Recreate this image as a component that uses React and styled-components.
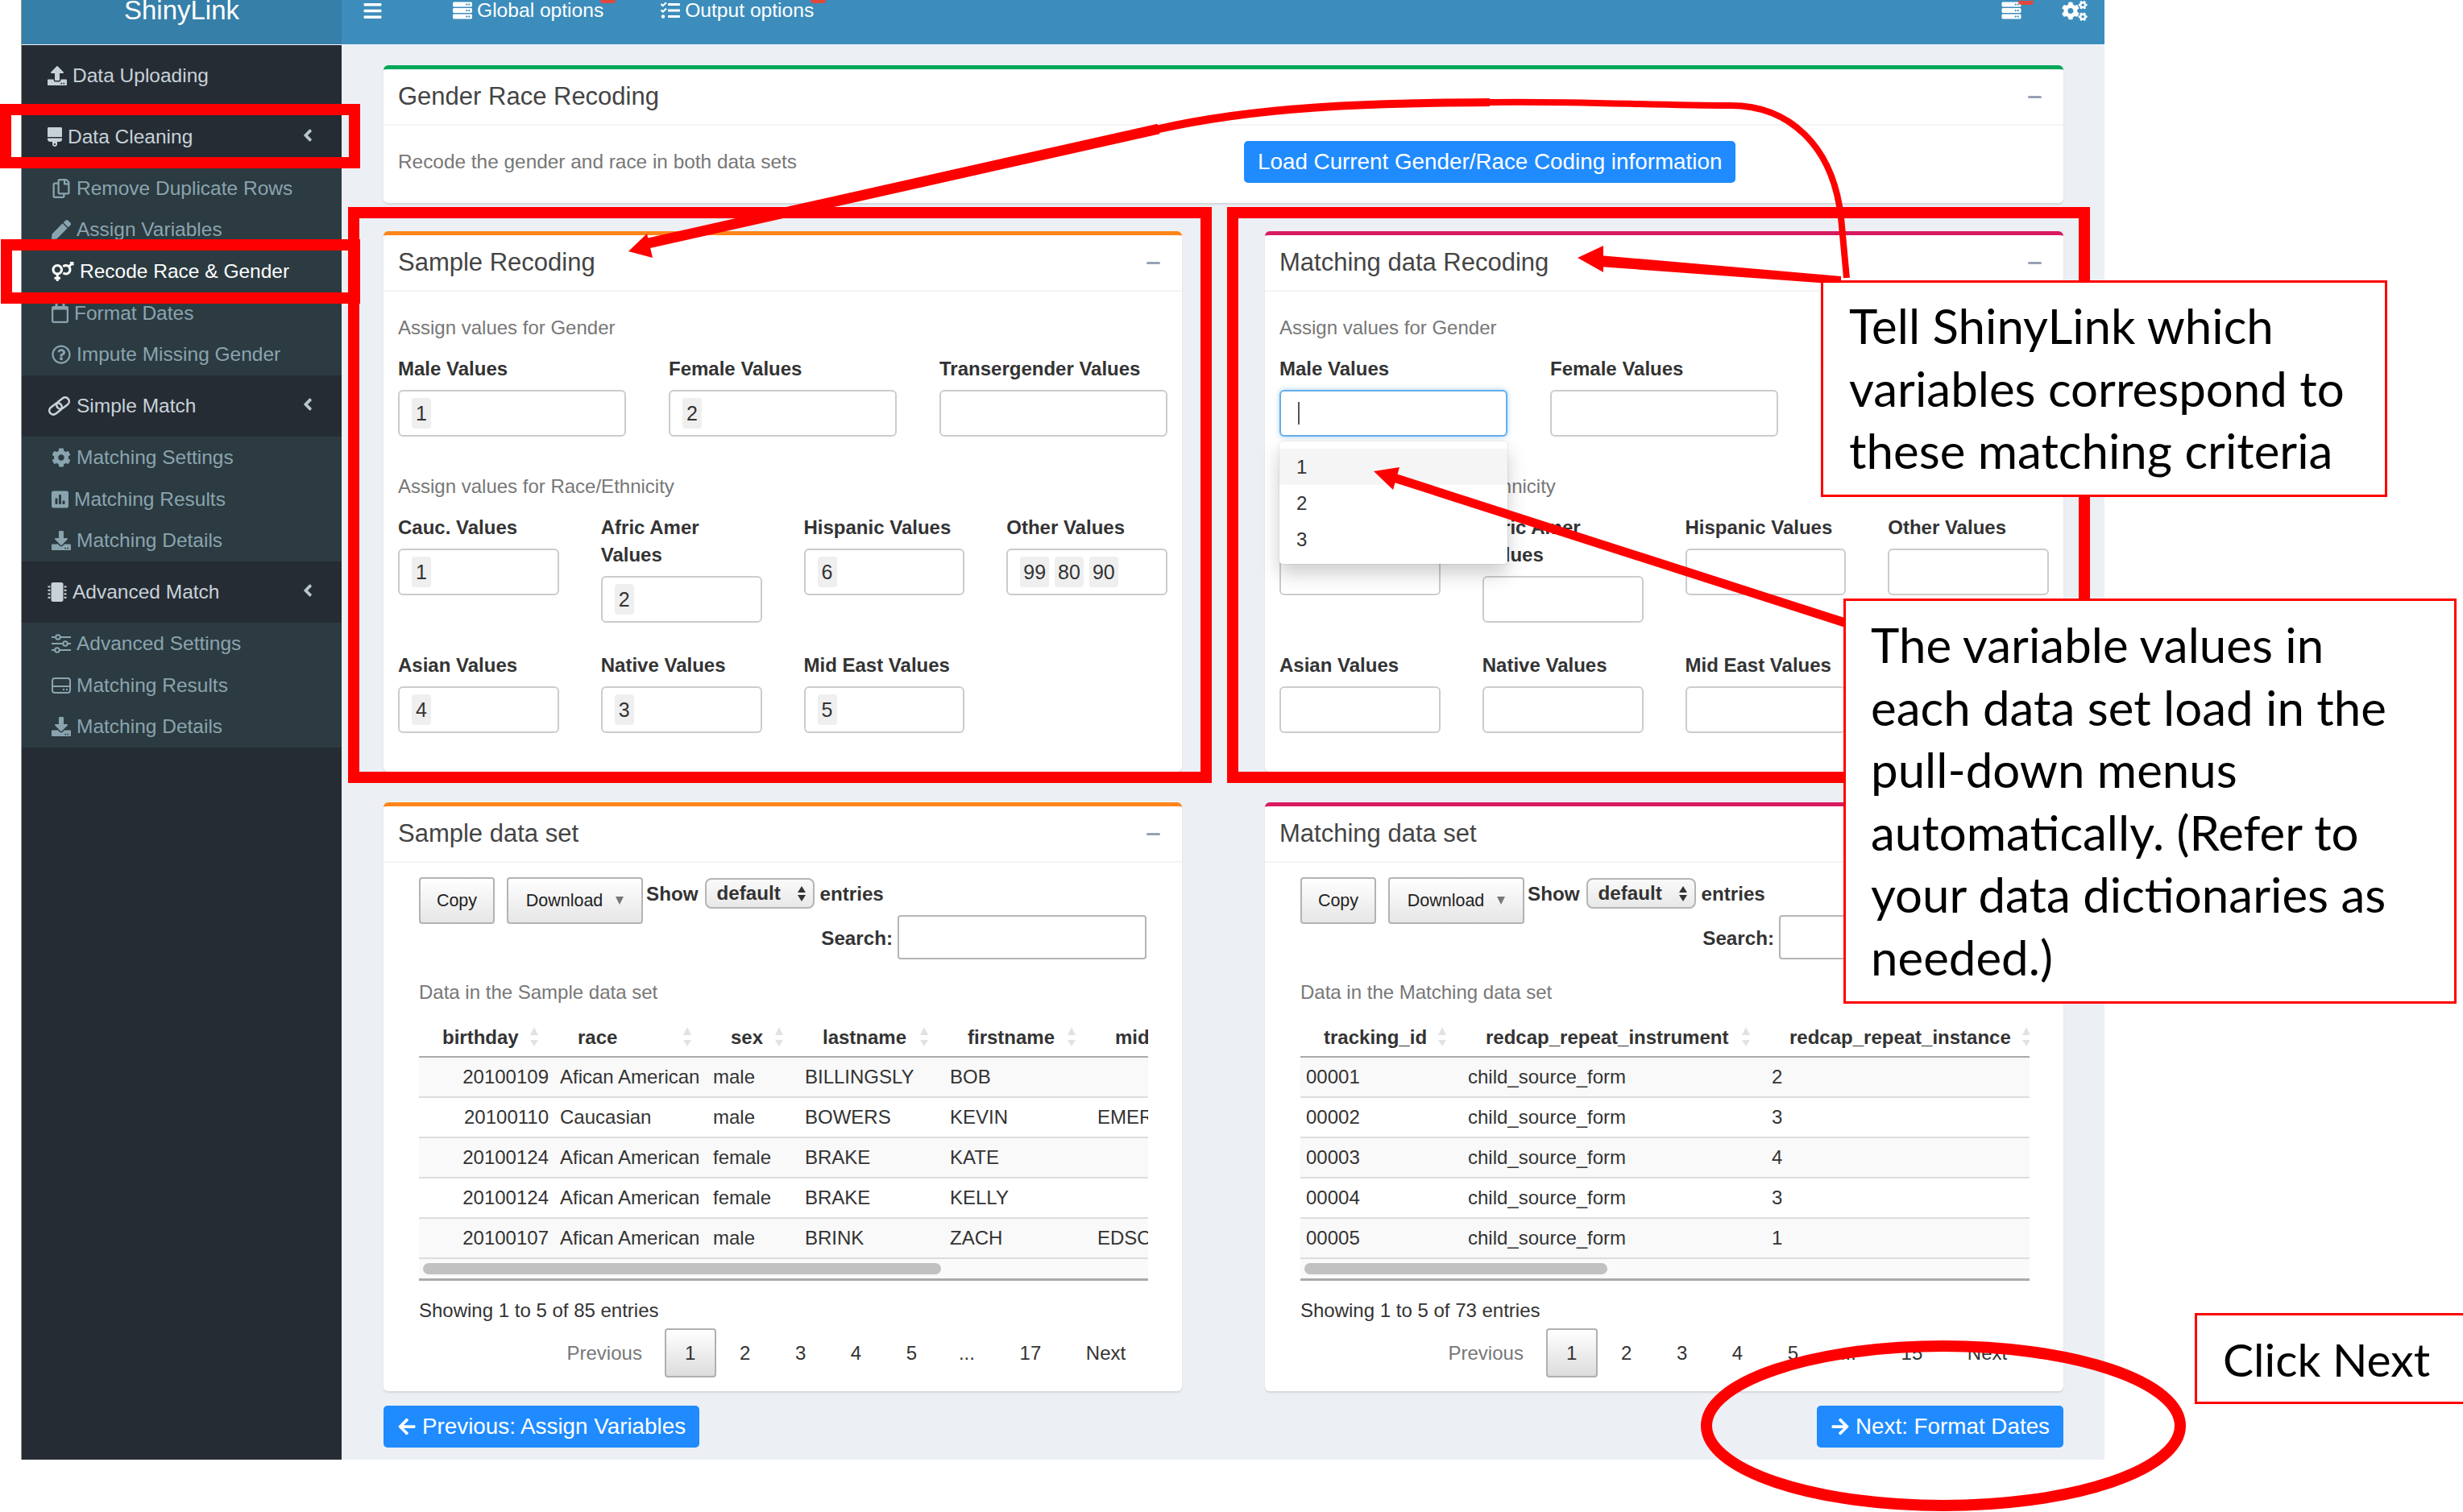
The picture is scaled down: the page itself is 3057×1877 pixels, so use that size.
import React from 'react';
import styled, { createGlobalStyle } from 'styled-components';
import {
  FaAngleLeft, FaArrowLeft, FaArrowRight, FaBars, FaBrush, FaCog, FaCogs, FaDownload,
  FaMicrochip, FaPen, FaPoll, FaRegCalendar, FaRegCopy, FaRegQuestionCircle,
  FaServer, FaTasks, FaUpload, FaVenusMars,
} from 'react-icons/fa';

const GlobalStyle = createGlobalStyle`
  html, body { margin: 0; background: #fff; }
  * { box-sizing: border-box; }
  body { font-family: "Liberation Sans", Arial, sans-serif; color: #333; }
`;

const Page = styled.div`
  position: relative;
  width: 3057px;
  height: 1877px;
  overflow: hidden;
`;

const Frame = styled.div`
  margin-left: 27px;
  width: 2585px;
  height: 1812px;
  display: flex;
  flex-direction: column;
  box-shadow: -1px 0 0 #999;
`;

const Header = styled.header`
  display: flex;
  height: 56px;
  flex: none;
  background: #3c8dbc;
  border-bottom: 1px solid #f4f6f9;
  color: #fff;
`;

const Logo = styled.div`
  width: 397px;
  height: 55px;
  background: #367fa9;
  font-size: 33px;
  line-height: 26px;
  text-align: center;
`;

const HeaderBar = styled.div`
  flex: 1;
  display: flex;
  height: 26px;
  align-items: center;
  padding: 0 21px 0 26px;
  font-size: 24.6px;
`;

const Burger = styled.span`
  display: flex;
  font-size: 25px;
  margin-right: 87px;
`;

const HeaderLink = styled.span`
  position: relative;
  display: flex;
  align-items: center;
  gap: 6px;
  margin-right: 71px;
  svg { font-size: 24px; }
`;

const Badge = styled.i`
  position: absolute;
  right: -15px;
  top: 0;
  width: 19px;
  height: 5px;
  background: #e0483c;
  border-radius: 0 0 4px 4px;
`;

const Spacer = styled.span`
  flex: 1;
`;

const HeaderIcon = styled.span`
  position: relative;
  display: flex;
  flex: none;
  width: ${(p) => p.$w}px;
  height: ${(p) => p.$h}px;
  margin-left: ${(p) => p.$gap || 0}px;
  svg { width: 100%; height: 100%; }
`;

const Body = styled.div`
  flex: 1;
  display: flex;
  min-height: 0;
`;

const Sidebar = styled.nav`
  width: 397px;
  flex: none;
  background: #262c34;
`;

const IconSlot = styled.span`
  display: flex;
  flex: none;
  width: ${(p) => p.$w}px;
  height: 24px;
  svg { width: 100%; height: 100%; }
`;

const NavItem = styled.div`
  display: flex;
  align-items: center;
  height: 76px;
  padding: 0 30px 0 32px;
  gap: 7px;
  font-size: 24.5px;
  color: #c6d2d8;
`;

const Chevron = styled(FaAngleLeft)`
  margin-left: auto;
  margin-bottom: 4px;
  font-size: 24px;
  color: #b8c7ce;
`;

const SubMenu = styled.div`
  background: #2c3b41;
`;

const SubItem = styled.div`
  display: flex;
  align-items: center;
  height: 51.67px;
  padding-left: 37px;
  gap: 7px;
  font-size: 24.5px;
  color: ${(p) => (p.$active ? '#fff' : '#8aa4af')};
`;

const Main = styled.main`
  flex: 1;
  background: #ecf0f5;
  padding: 25px 51px 0 52px;
`;

const Card = styled.section`
  background: #fff;
  border-top: 5px solid ${(p) => p.$accent};
  border-radius: 6px;
  box-shadow: 0 2px 2px rgba(0, 0, 0, 0.1);
  height: ${(p) => p.$height}px;
`;

const CardHeader = styled.div`
  display: flex;
  align-items: center;
  justify-content: space-between;
  height: 70px;
  padding: 0 27px 0 18px;
  border-bottom: 2px solid #f4f4f4;
`;

const CardTitle = styled.h3`
  margin: 0;
  font-size: 31px;
  font-weight: 400;
  color: #444;
`;

const Collapse = styled.span`
  width: 17px;
  height: 3px;
  background: #97a0b3;
  border-radius: 2px;
`;

const IntroRow = styled.div`
  display: flex;
  align-items: center;
  padding: 19px 18px;
`;

const IntroText = styled.div`
  width: 1050px;
  font-size: 24.4px;
  color: #777;
`;

const PrimaryButton = styled.button`
  display: inline-flex;
  align-items: center;
  gap: 7px;
  height: 52px;
  padding: 0 17px;
  border: 0;
  border-radius: 5px;
  background: #1f8bff;
  color: #fff;
  font: 27.8px "Liberation Sans", Arial, sans-serif;
  white-space: nowrap;
  svg { font-size: 24px; }
`;

const TwoColumns = styled.div`
  display: grid;
  grid-template-columns: 991px 991px;
  gap: 103px;
  margin-top: ${(p) => p.$top}px;
`;

const FormBody = styled.div`
  padding: 30px 18px 0;
`;

const Hint = styled.div`
  height: 30px;
  line-height: 30px;
  font-size: 24px;
  color: #777;
  margin-top: ${(p) => p.$top || 0}px;
`;

const FieldGrid = styled.div`
  display: grid;
  grid-template-columns: repeat(${(p) => p.$cols}, 1fr);
  column-gap: ${(p) => p.$gap}px;
  row-gap: 36px;
  align-items: start;
  margin-top: 19px;
`;

const Field = styled.div`
  position: relative;
`;

const FieldLabel = styled.div`
  font-size: 24px;
  line-height: 34px;
  font-weight: 700;
  color: #333;
  margin-bottom: 9px;
`;

const TagInput = styled.div`
  display: flex;
  align-items: center;
  gap: 7px;
  height: 58px;
  padding-left: ${(p) => (p.$focused ? 21 : 15)}px;
  background: #fff;
  border: 2px solid ${(p) => (p.$focused ? '#66afe9' : '#ccc')};
  border-radius: 6px;
  box-shadow: ${(p) => (p.$focused ? '0 0 6px rgba(102, 175, 233, 0.6)' : 'none')};
`;

const Tag = styled.span`
  display: flex;
  align-items: center;
  justify-content: center;
  min-width: 24px;
  height: 38px;
  padding: 0 4px;
  border-radius: 4px;
  background: #efefef;
  font-size: 25px;
  color: #333;
`;

const Caret = styled.i`
  width: 2px;
  height: 28px;
  background: #555;
`;

const Dropdown = styled.div`
  position: absolute;
  z-index: 2;
  top: 107px;
  left: 0;
  right: 0;
  height: 152px;
  padding-top: 9px;
  background: #fff;
  border-radius: 4px;
  box-shadow: 0 12px 24px rgba(0, 0, 0, 0.2), 0 0 2px rgba(0, 0, 0, 0.2);
`;

const Option = styled.div`
  height: 45px;
  line-height: 45px;
  padding-left: 21px;
  font-size: 24px;
  color: #333;
  background: ${(p) => (p.$active ? '#f5f5f5' : '#fff')};
`;

const TableBody = styled.div`
  padding: 18px 42px 0 44px;
`;

const Toolbar = styled.div`
  display: flex;
  align-items: flex-start;
  height: 47px;
`;

const DtButton = styled.button`
  display: flex;
  align-items: center;
  justify-content: center;
  flex: none;
  gap: 16px;
  width: ${(p) => p.$width}px;
  height: 58px;
  margin-right: ${(p) => p.$gap}px;
  padding: 0;
  background: linear-gradient(#fff, #e6e6e6);
  border: 2px solid #b3b3b3;
  border-radius: 4px;
  font: 21.5px "Liberation Sans", Arial, sans-serif;
  color: #222;
`;

const DownCaret = styled.i`
  width: 0;
  height: 0;
  border: 5px solid transparent;
  border-top: 10px solid #777;
  border-bottom: 0;
`;

const ToolText = styled.span`
  padding-top: 2px;
  font-size: 24.2px;
  font-weight: 700;
  line-height: 38px;
  color: #333;
`;

const SelectBox = styled.div`
  display: flex;
  align-items: center;
  justify-content: space-between;
  width: 136px;
  height: 38px;
  margin: 1px 7px 0 8px;
  padding: 0 9px 0 13px;
  background: linear-gradient(#fafafa, #e8e8e8);
  border: 2px solid #b5b5b5;
  border-radius: 8px;
  font-size: 24.2px;
  font-weight: 700;
  color: #333;
`;

const SelectArrows = styled.span`
  display: flex;
  flex-direction: column;
  gap: 3px;
  &::before, &::after {
    content: '';
    border: 5px solid transparent;
  }
  &::before { border-bottom: 8px solid #333; border-top: 0; }
  &::after { border-top: 8px solid #333; border-bottom: 0; }
`;

const SearchRow = styled.div`
  display: flex;
  align-items: center;
  justify-content: flex-end;
  gap: 6px;
  padding-right: 2px;
`;

const SearchBox = styled.div`
  width: 309px;
  height: 55px;
  background: #fff;
  border: 2px solid #b5b5b5;
  border-radius: 4px;
`;

const Caption = styled.div`
  height: 30px;
  line-height: 30px;
  margin: 26px 0 17px;
  font-size: 24px;
  color: #777;
`;

const TableWrap = styled.div`
  width: 905px;
  overflow: hidden;
`;

const Table = styled.table`
  table-layout: fixed;
  border-collapse: separate;
  border-spacing: 0;
  font-size: 24px;
  white-space: nowrap;
`;

const Th = styled.th`
  position: relative;
  height: 49px;
  padding: 0 0 0 29px;
  border-bottom: 2px solid #aaa;
  text-align: left;
  font-weight: 700;
  color: #333;
`;

const SortArrows = styled.span`
  position: absolute;
  right: 20px;
  top: 11px;
  display: flex;
  flex-direction: column;
  gap: 6px;
  &::before, &::after {
    content: '';
    border: 5px solid transparent;
  }
  &::before { border-bottom: 10px solid #e2e2e2; border-top: 0; }
  &::after { border-top: 8px solid #e2e2e2; border-bottom: 0; }
`;

const Td = styled.td`
  height: 50px;
  padding: 0 7px;
  border-bottom: 2px solid #ddd;
  text-align: ${(p) => p.$align || 'left'};
  overflow: hidden;
  color: #333;
  background: ${(p) => (p.$odd ? '#f9f9f9' : '#fff')};
`;

const ScrollTrack = styled.div`
  height: 27px;
  padding: 5px 0 0 ${(p) => p.$left}px;
  background: #fafafa;
  border-bottom: 3px solid #aaa;
`;

const ScrollThumb = styled.div`
  width: ${(p) => p.$width}px;
  height: 14px;
  background: #c1c1c1;
  border-radius: 7px;
`;

const Info = styled.div`
  height: 30px;
  line-height: 30px;
  margin-top: 22px;
  font-size: 24px;
  color: #333;
`;

const Pager = styled.div`
  display: flex;
  justify-content: flex-end;
  margin-top: 7px;
  font-size: 24px;
`;

const PageLink = styled.span`
  display: flex;
  align-items: center;
  height: 61px;
  padding: 0 27.8px 0 ${(p) => p.$left || 27.8}px;
  color: ${(p) => (p.$muted ? '#777' : '#333')};
`;

const CurrentPage = styled.span`
  display: flex;
  align-items: center;
  height: 61px;
  margin-right: 1.5px;
  padding: 0 23.3px;
  color: #333;
  border: 2px solid #b0b0b0;
  border-radius: 4px;
  background: linear-gradient(#fff, #dcdcdc);
`;

const FooterRow = styled.div`
  display: flex;
  justify-content: space-between;
  margin-top: 18px;
`;

const RedFrame = styled.div`
  position: absolute;
  z-index: 3;
  left: ${(p) => p.$x}px;
  top: ${(p) => p.$y}px;
  width: ${(p) => p.$w}px;
  height: ${(p) => p.$h}px;
  border: 14px solid #f00;
`;

const ArrowLayer = styled.svg`
  position: absolute;
  z-index: 3;
  left: 0;
  top: 0;
  pointer-events: none;
`;

const Callout = styled.div`
  position: absolute;
  z-index: 4;
  left: ${(p) => p.$x}px;
  top: ${(p) => p.$y}px;
  width: ${(p) => p.$w}px;
  height: ${(p) => p.$h}px;
  padding: ${(p) => p.$padTop}px 0 0 ${(p) => p.$pad}px;
  background: #fff;
  border: 3px solid #f00;
  font-family: Lato, "Open Sans", sans-serif;
  font-size: ${(p) => p.$size || 60}px;
  line-height: 77.5px;
  color: #000;
  white-space: nowrap;
`;

function LinkIcon() {
  return (
    <svg viewBox="0 0 29 23" fill="none" stroke="currentColor" strokeWidth="2.6">
      <rect x="1.5" y="10" width="17" height="10" rx="5" transform="rotate(-38 10 15)" />
      <rect x="10.5" y="3" width="17" height="10" rx="5" transform="rotate(-38 19 8)" />
    </svg>
  );
}

function SlidersIcon() {
  return (
    <svg viewBox="0 0 24 24" fill="none" stroke="currentColor" strokeWidth="2">
      <path d="M0 4H24M0 12H24M0 20H24" />
      <circle cx="8" cy="4" r="2.8" fill="#2c3b41" />
      <circle cx="17" cy="12" r="2.8" fill="#2c3b41" />
      <circle cx="7" cy="20" r="2.8" fill="#2c3b41" />
    </svg>
  );
}

function DriveIcon() {
  return (
    <svg viewBox="0 0 24 24" fill="none" stroke="currentColor" strokeWidth="2">
      <rect x="1" y="3" width="22" height="18" rx="3" />
      <path d="M1 13H23" />
      <path d="M14 17H16M18 17H20" />
    </svg>
  );
}

const sidebarGroups = [
  { label: 'Data Uploading', icon: FaUpload, iconWidth: 24 },
  {
    label: 'Data Cleaning',
    icon: FaBrush,
    iconWidth: 18,
    items: [
      ['Remove Duplicate Rows', FaRegCopy, 24],
      ['Assign Variables', FaPen, 24],
      ['Recode Race & Gender', FaVenusMars, 28, true],
      ['Format Dates', FaRegCalendar, 21],
      ['Impute Missing Gender', FaRegQuestionCircle, 24],
    ],
  },
  {
    label: 'Simple Match',
    icon: LinkIcon,
    iconWidth: 29,
    items: [
      ['Matching Settings', FaCog, 24],
      ['Matching Results', FaPoll, 21],
      ['Matching Details', FaDownload, 24],
    ],
  },
  {
    label: 'Advanced Match',
    icon: FaMicrochip,
    iconWidth: 24,
    items: [
      ['Advanced Settings', SlidersIcon, 24],
      ['Matching Results', DriveIcon, 24],
      ['Matching Details', FaDownload, 24],
    ],
  },
];

const sampleTable = {
  title: 'Sample data set',
  accent: '#ff851b',
  caption: 'Data in the Sample data set',
  info: 'Showing 1 to 5 of 85 entries',
  lastPage: '17',
  thumb: [5, 643],
  columns: [
    { label: 'birthday', width: 168, align: 'right' },
    { label: 'race', width: 190 },
    { label: 'sex', width: 114 },
    { label: 'lastname', width: 180 },
    { label: 'firstname', width: 183 },
    { label: 'middlename', width: 190, noArrows: true },
  ],
  rows: [
    ['20100109', 'Afican American', 'male', 'BILLINGSLY', 'BOB', ''],
    ['20100110', 'Caucasian', 'male', 'BOWERS', 'KEVIN', 'EMERY'],
    ['20100124', 'Afican American', 'female', 'BRAKE', 'KATE', ''],
    ['20100124', 'Afican American', 'female', 'BRAKE', 'KELLY', ''],
    ['20100107', 'Afican American', 'male', 'BRINK', 'ZACH', 'EDSON'],
  ],
};

const matchingTable = {
  title: 'Matching data set',
  accent: '#d81b60',
  caption: 'Data in the Matching data set',
  info: 'Showing 1 to 5 of 73 entries',
  lastPage: '15',
  thumb: [5, 376],
  columns: [
    { label: 'tracking_id', width: 201 },
    { label: 'redcap_repeat_instrument', width: 377 },
    { label: 'redcap_repeat_instance', width: 348 },
  ],
  rows: [
    ['00001', 'child_source_form', '2'],
    ['00002', 'child_source_form', '3'],
    ['00003', 'child_source_form', '4'],
    ['00004', 'child_source_form', '3'],
    ['00005', 'child_source_form', '1'],
  ],
};

function SideNav() {
  return (
    <Sidebar>
      {sidebarGroups.map((group) => (
        <div key={group.label}>
          <NavItem>
            <IconSlot $w={group.iconWidth}><group.icon /></IconSlot>
            {group.label}
            {group.items && <Chevron />}
          </NavItem>
          {group.items && (
            <SubMenu>
              {group.items.map(([label, Icon, width, active]) => (
                <SubItem key={label} $active={active}>
                  <IconSlot $w={width}><Icon /></IconSlot>
                  {label}
                </SubItem>
              ))}
            </SubMenu>
          )}
        </div>
      ))}
    </Sidebar>
  );
}

function CardTop({ title }) {
  return (
    <CardHeader>
      <CardTitle>{title}</CardTitle>
      <Collapse />
    </CardHeader>
  );
}

function TagField({ label, values = [], focused, children }) {
  return (
    <Field>
      <FieldLabel>{label}</FieldLabel>
      <TagInput $focused={focused}>
        {focused && <Caret />}
        {values.map((value) => (
          <Tag key={value}>{value}</Tag>
        ))}
      </TagInput>
      {children}
    </Field>
  );
}

function RecodingCard({ title, accent, values, open }) {
  return (
    <Card $accent={accent} $height={671}>
      <CardTop title={title} />
      <FormBody>
        <Hint>Assign values for Gender</Hint>
        <FieldGrid $cols={3} $gap={53}>
          <TagField label="Male Values" values={values.male} focused={open}>
            {open && (
              <Dropdown>
                <Option $active>1</Option>
                <Option>2</Option>
                <Option>3</Option>
              </Dropdown>
            )}
          </TagField>
          <TagField label="Female Values" values={values.female} />
          <TagField label="Transergender Values" />
        </FieldGrid>
        <Hint $top={47}>Assign values for Race/Ethnicity</Hint>
        <FieldGrid $cols={4} $gap={52}>
          <TagField label="Cauc. Values" values={values.cauc} />
          <TagField label="Afric Amer Values" values={values.afric} />
          <TagField label="Hispanic Values" values={values.hispanic} />
          <TagField label="Other Values" values={values.other} />
          <TagField label="Asian Values" values={values.asian} />
          <TagField label="Native Values" values={values.native} />
          <TagField label="Mid East Values" values={values.mideast} />
        </FieldGrid>
      </FormBody>
    </Card>
  );
}

function DataCard({ data }) {
  const total = data.columns.reduce((sum, col) => sum + col.width, 0);
  return (
    <Card $accent={data.accent} $height={731}>
      <CardTop title={data.title} />
      <TableBody>
        <Toolbar>
          <DtButton $width={94} $gap={15}>Copy</DtButton>
          <DtButton $width={169} $gap={4}>Download<DownCaret /></DtButton>
          <ToolText>Show</ToolText>
          <SelectBox>default<SelectArrows /></SelectBox>
          <ToolText>entries</ToolText>
        </Toolbar>
        <SearchRow>
          <ToolText>Search:</ToolText>
          <SearchBox />
        </SearchRow>
        <Caption>{data.caption}</Caption>
        <TableWrap>
          <Table style={{ width: total }}>
            <colgroup>
              {data.columns.map((col) => (
                <col key={col.label} style={{ width: col.width }} />
              ))}
            </colgroup>
            <thead>
              <tr>
                {data.columns.map((col) => (
                  <Th key={col.label}>
                    {col.label}
                    {!col.noArrows && <SortArrows />}
                  </Th>
                ))}
              </tr>
            </thead>
            <tbody>
              {data.rows.map((row, r) => (
                <tr key={row[0] + r}>
                  {row.map((cell, c) => (
                    <Td key={c} $odd={r % 2 === 0} $align={data.columns[c].align}>{cell}</Td>
                  ))}
                </tr>
              ))}
            </tbody>
          </Table>
          <ScrollTrack $left={data.thumb[0]}>
            <ScrollThumb $width={data.thumb[1]} />
          </ScrollTrack>
        </TableWrap>
        <Info>{data.info}</Info>
        <Pager>
          <PageLink $muted>Previous</PageLink>
          <CurrentPage>1</CurrentPage>
          {['2', '3', '4', '5'].map((page) => (
            <PageLink key={page}>{page}</PageLink>
          ))}
          <PageLink $left={24}>...</PageLink>
          <PageLink>{data.lastPage}</PageLink>
          <PageLink>Next</PageLink>
        </Pager>
      </TableBody>
    </Card>
  );
}

function Annotations() {
  return (
    <>
      <RedFrame $x={0} $y={129} $w={447} $h={80} />
      <RedFrame $x={1} $y={297} $w={446} $h={80} />
      <RedFrame $x={432} $y={257} $w={1072} $h={715} />
      <RedFrame $x={1523} $y={257} $w={1071} $h={715} />
      <ArrowLayer width="3057" height="1877" viewBox="0 0 3057 1877" fill="none" stroke="#f00">
        <path d="M800 303 L1438 160" strokeWidth="13" />
        <path d="M1434 161 C1560 132 1700 128 1849 127" strokeWidth="10" />
        <path d="M1845 127 C1950 125 2050 131 2148 131 C2220 131 2275 180 2285 270 L2292 345" strokeWidth="8" />
        <polygon points="780,312 803,290 810,320" fill="#f00" stroke="none" />
        <polygon points="1958,320 1990,305 1990,338" fill="#f00" stroke="none" />
        <polygon points="1985,317 2285,343 2285,353 1985,331" fill="#f00" stroke="none" />
        <polygon points="1705,585 1737,580 1729,608" fill="#f00" stroke="none" />
        <path d="M1730 593 L2290 773" strokeWidth="11" />
        <ellipse cx="2412" cy="1770" rx="294" ry="99" strokeWidth="14" />
      </ArrowLayer>
      <Callout $x={2260} $y={348} $w={703} $h={269} $pad={32} $padTop={15}>
        Tell ShinyLink which<br />variables correspond to<br />these matching criteria
      </Callout>
      <Callout $x={2288} $y={743} $w={761} $h={503} $pad={31} $padTop={16}>
        The variable values in<br />each data set load in the<br />pull-down menus<br />
        automatically. (Refer to<br />your data dictionaries as<br />needed.)
      </Callout>
      <Callout $x={2724} $y={1630} $w={340} $h={113} $pad={32} $padTop={16} $size={57}>
        Click Next
      </Callout>
    </>
  );
}

export default function App() {
  return (
    <Page>
      <GlobalStyle />
      <Frame>
        <Header>
          <Logo>ShinyLink</Logo>
          <HeaderBar>
            <Burger><FaBars /></Burger>
            <HeaderLink><FaServer />Global options<Badge /></HeaderLink>
            <HeaderLink><FaTasks />Output options<Badge /></HeaderLink>
            <Spacer />
            <HeaderIcon $w={25} $h={24}><FaServer /><Badge /></HeaderIcon>
            <HeaderIcon $gap={50} $w={32} $h={25}><FaCogs /></HeaderIcon>
          </HeaderBar>
        </Header>
        <Body>
          <SideNav />
          <Main>
            <Card $accent="#00a65a" $height={171}>
              <CardTop title="Gender Race Recoding" />
              <IntroRow>
                <IntroText>Recode the gender and race in both data sets</IntroText>
                <PrimaryButton>Load Current Gender/Race Coding information</PrimaryButton>
              </IntroRow>
            </Card>
            <TwoColumns $top={35}>
              <RecodingCard
                title="Sample Recoding"
                accent="#ff851b"
                values={{
                  male: ['1'], female: ['2'], cauc: ['1'], afric: ['2'], hispanic: ['6'],
                  other: ['99', '80', '90'], asian: ['4'], native: ['3'], mideast: ['5'],
                }}
              />
              <RecodingCard title="Matching data Recoding" accent="#d81b60" values={{}} open />
            </TwoColumns>
            <TwoColumns $top={38}>
              <DataCard data={sampleTable} />
              <DataCard data={matchingTable} />
            </TwoColumns>
            <FooterRow>
              <PrimaryButton><FaArrowLeft />Previous: Assign Variables</PrimaryButton>
              <PrimaryButton><FaArrowRight />Next: Format Dates</PrimaryButton>
            </FooterRow>
          </Main>
        </Body>
      </Frame>
      <Annotations />
    </Page>
  );
}
